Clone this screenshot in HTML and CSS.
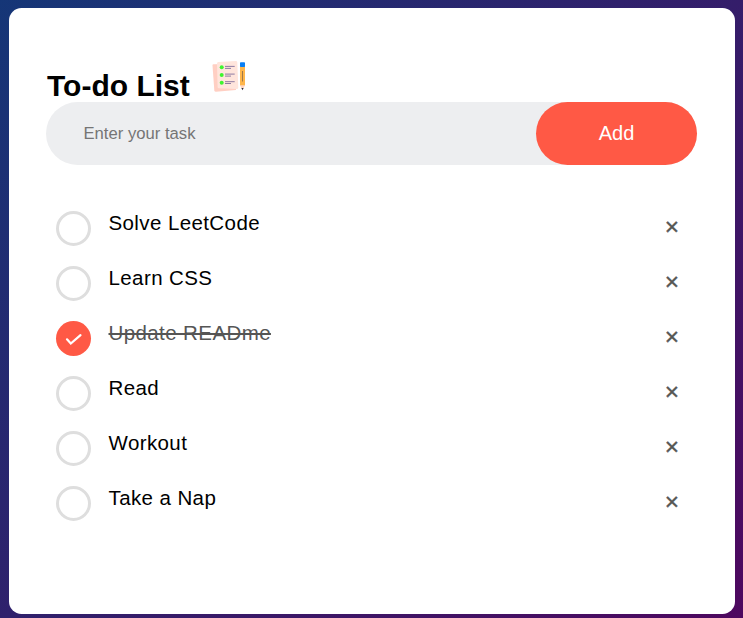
FILE: index.html
```html
<!DOCTYPE html>
<html lang="en">
<head>
<meta charset="utf-8">
<title>To-do List</title>
<link rel="stylesheet" href="styles.css">
</head>
<body>
<main class="todo-app">
  <h2 class="title"><span class="title-text">To-do List</span>
    <svg class="title-icon" viewBox="0 0 37 37" aria-hidden="true">
      <path fill="#ffcfc3" d="M3.300 6.300L24 6L26 32L6 33.700Q4.500 33.700 4.300 32.200L2.500 7.500Q2.500 6.400 3.300 6.300Z"/>
      <path fill="#ffe5dc" d="M8.300 4L25.800 3Q27.200 3 27.300 4.300L28.300 29.500Q28.300 31 26.800 31L9 30.300Q7.700 30.300 7.600 29L7 5.400Q7 4.100 8.300 4Z"/>
      <g fill="#3ef52f"><circle cx="11.700" cy="9.200" r="2"/><circle cx="11.700" cy="17" r="2"/><circle cx="11.700" cy="24.700" r="2"/></g>
      <g fill="none" stroke="#816e9b" stroke-width=".9"><path d="M15 8.400h9.700M15 16.100h9.700M15 23.700h9.700M15 10.400h6M15 18.100h6M15 25.500h6"/></g>
      <path fill="#ffb64b" d="M30 8h5v19l-2.500 4-2.500-4z"/>
      <path fill="none" stroke="#93704b" stroke-width=".9" d="M32.500 13v10.500"/>
      <path fill="#ffd5c5" d="M30 27.300h5l-2.500 4z"/>
      <path fill="#302c38" d="M31.400 30h2.200l-1.100 2.200z"/>
      <rect x="30" y="4.300" width="5" height="4.700" rx=".8" fill="#087ff5"/>
    </svg>
  </h2>
  <div class="row">
    <input class="task-input" type="text" placeholder="Enter your task">
    <button class="add-button">Add</button>
  </div>
  <ul class="tasks">
    <li class="task"><span class="mark"></span><span class="label">Solve LeetCode</span><span class="remove">×</span></li>
    <li class="task"><span class="mark"></span><span class="label">Learn CSS</span><span class="remove">×</span></li>
    <li class="task done"><span class="mark"><svg class="tick" viewBox="0 0 35 35"><path d="M11 18.300l3.800 4.200 9.700-8.300"/></svg></span><span class="label">Update READme</span><span class="remove">×</span></li>
    <li class="task"><span class="mark"></span><span class="label">Read</span><span class="remove">×</span></li>
    <li class="task"><span class="mark"></span><span class="label">Workout</span><span class="remove">×</span></li>
    <li class="task"><span class="mark"></span><span class="label">Take a Nap</span><span class="remove">×</span></li>
  </ul>
</main>
</body>
</html>
```
FILE: styles.css
```css
* { box-sizing: border-box; margin: 0; padding: 0; }
body {
  height: 618px;
  padding: 8px 8px 4px 9px;
  overflow: hidden;
  font-family: "Liberation Sans", Arial, sans-serif;
  background: linear-gradient(135deg, #153677, #4e085f);
}
.todo-app {
  height: 606px;
  padding: 50px 38px 0 37px;
  border-radius: 12.5px;
  background: #fff;
}
.title {
  display: flex;
  align-items: flex-start;
  height: 44px;
  padding-left: 1px;
  font-size: 30px;
  line-height: 55px;
}
.title-text { width: 142px; white-space: nowrap; }
.title-icon { width: 37px; height: 37px; margin-left: 21px; }
.row {
  display: flex;
  height: 63px;
  border-radius: 32px;
  background: #edeef0;
}
.task-input {
  flex: 1;
  min-width: 0;
  padding-left: 37.5px;
  border: 0;
  outline: 0;
  background: transparent;
  font: 16.667px "Liberation Sans", Arial, sans-serif;
}
.task-input::placeholder { color: #757575; }
.add-button {
  width: 161px;
  border: 0;
  border-radius: 50px;
  background: #ff5945;
  color: #fff;
  font: 20px "Liberation Sans", Arial, sans-serif;
}
.tasks { padding: 40px 10px 0; list-style: none; }
.task {
  display: flex;
  height: 55px;
  padding-top: 6px;
  font-size: 20.5px;
}
.mark {
  width: 35px;
  height: 35px;
  border: 3px solid #dedede;
  border-radius: 50%;
}
.label { margin-left: 17.5px; line-height: 24px; letter-spacing: 0.4px; font-kerning: normal; }
.remove {
  width: 30px;
  margin-left: auto;
  color: #555;
  font-size: 24.5px;
  line-height: 31px;
  text-align: center;
  -webkit-text-stroke: 0.4px #555;
}
.done .mark { border: 0; background: #ff5945; }
.done .label { color: #555; text-decoration: line-through; }
.tick { display: block; fill: none; stroke: #fff; stroke-width: 2.200; stroke-linecap: round; }
```
